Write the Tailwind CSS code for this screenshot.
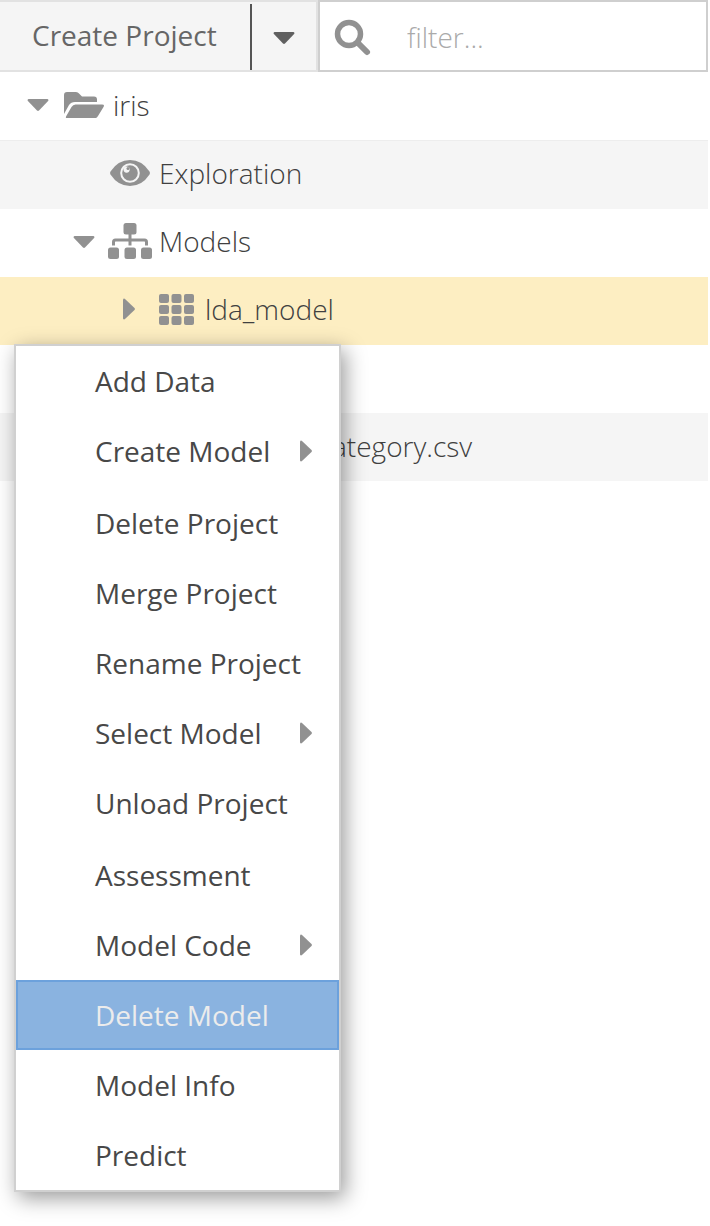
<!DOCTYPE html>
<html lang="en">
<head>
<meta charset="utf-8">
<title>Projects</title>
<script src="https://cdn.jsdelivr.net/npm/@tailwindcss/browser@4"></script>
</head>
<body class="min-h-screen bg-white pr-0.5 font-['Open_Sans','Noto_Sans',sans-serif] text-[28px] text-[#404040]">
<svg class="hidden" aria-hidden="true">
  <symbol id="down" viewBox="0 0 22 12"><path d="M1.500 0h19q1.500 .6.600 2L12 11.500q-1 .8-2 0L.9 2Q0 .6 1.500 0z"/></symbol>
  <symbol id="right" viewBox="0 0 12 22"><path d="M0 1.500v19q.6 1.500 2 .6L11.500 12q.8-1 0-2L2 .9Q.6 0 0 1.500z"/></symbol>
</svg>

<header class="flex h-[72px]">
  <div class="flex w-[318px] shrink-0 border-y-2 border-r-2 border-[#e2e2e2] bg-[#f5f5f5] text-[#666]">
    <button type="button" class="grow pl-8 pb-0.5 text-left">Create Project</button>
    <button type="button" aria-label="More create options" class="mt-0.5 flex w-[66px] items-center justify-center border-l-2 border-[#555] pt-0.5">
      <svg class="h-3 w-[22px] fill-[#606060]"><use href="#down"/></svg>
    </button>
  </div>
  <label class="flex min-w-0 grow items-center border-2 border-[#cfcfcf] bg-white pl-[15px]">
    <svg class="mt-1 h-9 w-9 shrink-0 overflow-visible" viewBox="0 0 36 36" fill="none" stroke="#919191"><circle cx="14" cy="14" r="11.500" stroke-width="5.500"/><path d="M23.500 23.500l8.500 8.500" stroke-width="6" stroke-linecap="round"/></svg>
    <input type="text" aria-label="Filter" placeholder="filter..." class="ml-9 min-w-0 grow pt-0.5 font-light outline-none placeholder:text-[#aaa]">
  </label>
</header>

<main class="relative">
  <ul class="font-light">
    <li class="flex h-[69px] items-center border-b border-[#ededed] pb-0.5 pl-[27px]">
      <svg class="h-3 w-[22px] fill-[#919191]"><use href="#down"/></svg>
      <svg class="ml-[15px] h-[26px] w-10" viewBox="0 0 40 26" fill="#919191"><path d="M0 3q0-3 3-3h9q2 0 3 1.500L18 4.500h12q3 0 3 3V10H11Q7 10 5 13L0 22z"/><path d="M11.500 12.500H38q3 0 1.500 2.500l-5.500 9q-1.500 2.500-4 2.500H3.500q-2.500 0-1.200-2.500l5.200-9q1.500-2.500 4-2.500z"/></svg>
      <span class="ml-[9px]">iris</span>
    </li>
    <li class="flex h-[68px] items-center bg-[#f5f5f5] pb-1 pl-[110px]">
      <svg class="h-[26px] w-10" viewBox="0 0 40 26"><path fill="#919191" d="M.5 11.500Q8 0 20 0t19.500 11.500q.8 1.500 0 3Q32 26 20 26T.5 14.500q-.8-1.500 0-3z"/><circle cx="20" cy="13" r="8.800" fill="none" stroke="#f5f5f5" stroke-width="2"/><circle cx="16.600" cy="9.600" r="3.100" fill="#f5f5f5"/><circle cx="18" cy="8.600" r="1.500" fill="#919191"/></svg>
      <span class="ml-[9px]">Exploration</span>
    </li>
    <li class="flex h-[68px] items-center pb-1 pl-[73px]">
      <svg class="mt-0.5 h-3 w-[22px] fill-[#919191]"><use href="#down"/></svg>
      <svg class="ml-[13px] h-9 w-11" viewBox="0 0 44 36" fill="#919191"><rect x="15.500" width="13" height="11.500" rx="2.500"/><rect y="24.500" width="11" height="11.500" rx="2.500"/><rect x="16.500" y="24.500" width="11.500" height="11.500" rx="2.500"/><rect x="33" y="24.500" width="11" height="11.500" rx="2.500"/><path d="M22 10v12.500M5.500 22.500v-3.500q0-2 2-2h29q2 0 2 2v3.500" fill="none" stroke="#919191" stroke-width="3"/></svg>
      <span class="ml-[7px]">Models</span>
    </li>
    <li class="flex h-[68px] items-center bg-[#fdeec2] pb-1 pl-[123px]">
      <svg class="h-[22px] w-3 fill-[#919191]"><use href="#right"/></svg>
      <svg class="ml-6 h-[31px] w-[35px]" viewBox="0 0 35 31" fill="#919191"><rect width="10" height="9" rx="2"/><rect x="12.500" width="10" height="9" rx="2"/><rect x="25" width="10" height="9" rx="2"/><rect y="11" width="10" height="9" rx="2"/><rect x="12.500" y="11" width="10" height="9" rx="2"/><rect x="25" y="11" width="10" height="9" rx="2"/><rect y="22" width="10" height="9" rx="2"/><rect x="12.500" y="22" width="10" height="9" rx="2"/><rect x="25" y="22" width="10" height="9" rx="2"/></svg>
      <span class="ml-[11px]">lda_model</span>
    </li>
    <li class="h-[68px]"></li>
    <li class="flex h-[68px] items-center bg-[#f5f5f5] pb-0.5 pl-[332px]">ategory.csv</li>
  </ul>

  <div role="menu" class="absolute left-3.5 top-[272px] flex w-[327px] flex-col border-2 border-[#d0d0d0] bg-white text-[#484848] shadow-[4px_6px_20px_rgba(0,0,0,0.4)]">
    <button type="button" role="menuitem" class="flex h-[70px] items-center pl-[79px]">Add Data</button>
    <button type="button" role="menuitem" class="mb-0.5 flex h-[70px] items-center justify-between pl-[79px] pr-[27px]">Create Model<svg class="h-[22px] w-3 fill-[#919191]"><use href="#right"/></svg></button>
    <button type="button" role="menuitem" class="flex h-[70px] items-center pl-[79px]">Delete Project</button>
    <button type="button" role="menuitem" class="flex h-[70px] items-center pl-[79px]">Merge Project</button>
    <button type="button" role="menuitem" class="flex h-[70px] items-center pl-[79px]">Rename Project</button>
    <button type="button" role="menuitem" class="flex h-[70px] items-center justify-between pl-[79px] pr-[27px]">Select Model<svg class="h-[22px] w-3 fill-[#919191]"><use href="#right"/></svg></button>
    <button type="button" role="menuitem" class="mb-0.5 flex h-[70px] items-center pl-[79px]">Unload Project</button>
    <button type="button" role="menuitem" class="flex h-[70px] items-center pl-[79px]">Assessment</button>
    <button type="button" role="menuitem" class="flex h-[70px] items-center justify-between pl-[79px] pr-[27px]">Model Code<svg class="h-[22px] w-3 fill-[#919191]"><use href="#right"/></svg></button>
    <button type="button" role="menuitem" class="flex h-[70px] items-center border-2 border-[#6ca1dc] bg-[#8ab3e0] pl-[77px] text-[#ececec]">Delete Model</button>
    <button type="button" role="menuitem" class="flex h-[70px] items-center pl-[79px]">Model Info</button>
    <button type="button" role="menuitem" class="flex h-[70px] items-center pl-[79px]">Predict</button>
  </div>
</main>
</body>
</html>
